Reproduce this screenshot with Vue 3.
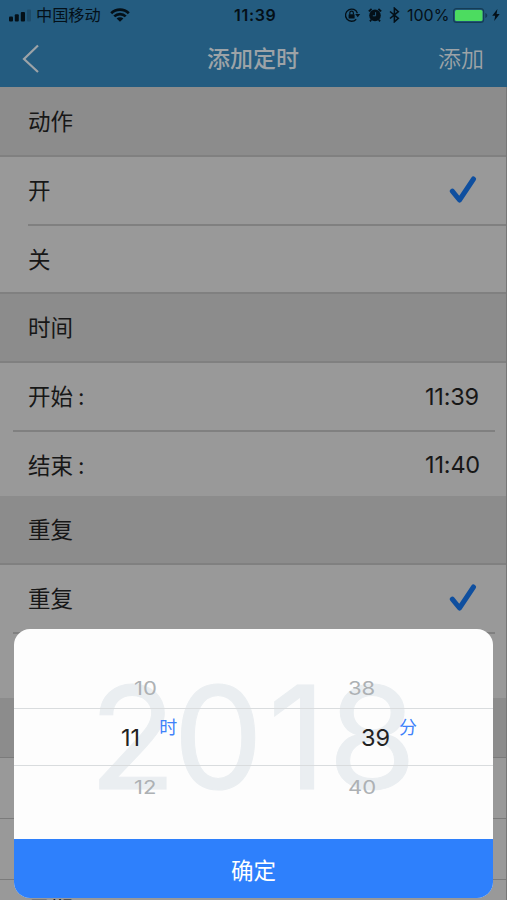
<script setup>
import { ref } from 'vue'

const action = ref('on')
const repeat = ref(true)
const start = ref('11:39')
const end = ref('11:40')
const showPicker = ref(true)
const hours = ['10', '11', '12']
const minutes = ['38', '39', '40']
const confirm = () => {
  showPicker.value = false
}
</script>
<template>
  <div class="page">
    <div class="top">
      <div class="status">
        <svg class="signal" width="24" height="14" viewBox="0 0 24 14">
          <rect x="0" y="8.5" width="4" height="5" rx="1" />
          <rect x="5.8" y="6.3" width="4" height="7.2" rx="1" />
          <rect x="11.8" y="4" width="4.2" height="9.5" rx="1" />
          <rect x="18" y="1.5" width="4" height="12" rx="1" opacity=".2" />
        </svg>
        <span class="carrier">中国移动</span>
        <svg class="wifi" width="20" height="14" viewBox="0 0 20 14">
          <path d="M1.2 5.2a12.6 12.6 0 0 1 17.6 0M4.3 8.4a8.1 8.1 0 0 1 11.4 0" fill="none" stroke="#041018" stroke-width="2.7" />
          <path d="M10 13.8 6.6 10.6a4.8 4.8 0 0 1 6.8 0z" />
        </svg>
        <span class="clock">11:39</span>
        <svg class="lock" width="17" height="16" viewBox="0 0 17 16">
          <path d="M12.2 12.2a6.1 6.1 0 1 1 1.2-6" fill="none" stroke="#041018" stroke-width="1.3" />
          <path d="M11.2 7h5l-2.5 3.2z" />
          <rect x="4.6" y="7.2" width="6" height="4.4" rx=".6" />
          <path d="M5.8 7.4V6a1.8 1.8 0 0 1 3.6 0v1.4" fill="none" stroke="#041018" stroke-width="1.2" />
        </svg>
        <svg class="alarm" width="14" height="14" viewBox="0 0 14 14">
          <circle cx="7" cy="7.4" r="5.8" />
          <path d="M.8 3.4 3.6 1M13.2 3.4 10.4 1M3.2 11.8 2 13.4M10.8 11.8 12 13.4" stroke="#041018" stroke-width="1.8" />
          <path d="M7.6 4.2v3.6H4.8" fill="none" stroke="#245c80" stroke-width="1" />
        </svg>
        <svg class="bt" width="11" height="16" viewBox="0 0 11 16">
          <path d="M1 4.5 9.3 11.3 5.4 14.8V1.2L9.3 4.7 1 11.5" fill="none" stroke="#041018" stroke-width="1.6" />
        </svg>
        <span class="percent">100%</span>
        <svg class="battery" width="35" height="15" viewBox="0 0 35 15">
          <rect x=".6" y=".6" width="30" height="13.8" rx="3" fill="none" stroke="#153c55" stroke-width="1.1" />
          <rect x="2" y="2" width="27.5" height="11" rx="1.5" fill="#4cdc60" />
          <path d="M32.3 5v5c2.6-1 2.6-4 0-5z" fill="#153c55" />
        </svg>
        <svg class="bolt" width="8" height="12" viewBox="0 0 8 12">
          <path d="M5.4 0 .2 6.8h3L2.2 12l5.5-7H4.6z" />
        </svg>
      </div>
      <div class="nav">
        <svg class="back" width="18" height="30" viewBox="0 0 18 30">
          <path d="M16 1.5 2 15l14 13" fill="none" stroke="#9da3a7" stroke-width="2.2" />
        </svg>
        <h1>添加定时</h1>
        <span class="add">添加</span>
      </div>
    </div>

    <div class="section first">动作</div>
    <div class="row" @click="action = 'on'">
      <span>开</span>
      <svg v-if="action === 'on'" class="check" width="28" height="28" viewBox="0 0 28 28">
        <path d="M3.3 15.2 10.5 24 24.5 3" />
      </svg>
    </div>
    <div class="row inset" @click="action = 'off'">
      <span>关</span>
      <svg v-if="action === 'off'" class="check" width="28" height="28" viewBox="0 0 28 28">
        <path d="M3.3 15.2 10.5 24 24.5 3" />
      </svg>
    </div>
    <div class="section ruled">时间</div>
    <div class="row">
      <span>开始<i>:</i></span>
      <span class="time">{{ start }}</span>
    </div>
    <div class="row short">
      <span>结束<i>:</i></span>
      <span class="time">{{ end }}</span>
    </div>
    <div class="section repeat">重复</div>
    <div class="row" @click="repeat = !repeat">
      <span>重复</span>
      <svg v-if="repeat" class="check" width="28" height="28" viewBox="0 0 28 28">
        <path d="M3.3 15.2 10.5 24 24.5 3" />
      </svg>
    </div>
    <div class="row gap"></div>
    <div class="section small"></div>
    <div class="row day"></div>
    <div class="row day"></div>
    <div class="row day"><span>星期</span></div>

    <div class="edge"></div>

    <div v-if="showPicker" class="picker">
      <div class="wheels">
        <svg class="year" width="479" height="210" viewBox="0 0 479 210">
          <text x="75 159 254 314" y="160">2018</text>
        </svg>
        <div class="band"></div>
        <div class="wheel">
          <span class="far">{{ hours[0] }}</span>
          <span class="now">{{ hours[1] }}<em>时</em></span>
          <span class="far">{{ hours[2] }}</span>
        </div>
        <div class="wheel minute">
          <span class="far">{{ minutes[0] }}</span>
          <span class="now">{{ minutes[1] }}<em>分</em></span>
          <span class="far">{{ minutes[2] }}</span>
        </div>
      </div>
      <button class="ok" @click="confirm">确定</button>
    </div>
  </div>
</template>

<style>
body {
  margin: 0;
  overflow: hidden;
}
</style>

<style scoped>
.page {
  position: relative;
  width: 507px;
  height: 900px;
  overflow: hidden;
  background: #999;
  color: #171717;
  font-family: Inter, "Noto Sans CJK SC", sans-serif;
  font-size: 22.5px;
}
.page * {
  box-sizing: border-box;
}
.top {
  height: 87px;
  background: #245c80;
}
.status {
  height: 30px;
  display: flex;
  align-items: center;
  padding-left: 9px;
  color: #041018;
  fill: #041018;
  font-size: 16.2px;
  line-height: 30px;
}
.status svg {
  flex: none;
}
.carrier {
  width: 66px;
  margin-left: 3px;
}
.wifi {
  margin-left: 8px;
}
.clock {
  width: 110px;
  margin-left: 104px;
  font-weight: 600;
  font-size: 16px;
  letter-spacing: 0.7px;
}
.alarm {
  margin-left: 7px;
}
.bt {
  margin-left: 7px;
}
.percent {
  width: 46px;
  margin-left: 7px;
  font-size: 16px;
}
.bolt {
  margin-left: 4px;
}
.nav {
  height: 57px;
  display: grid;
  grid-template-columns: 100px 1fr 100px;
  align-items: center;
  padding: 0 23px 0 22px;
  color: #9da3a7;
}
h1 {
  margin: 0;
  text-align: center;
  font-size: 23px;
  font-weight: 500;
  line-height: 40px;
}
.add {
  text-align: right;
  font-size: 23px;
  font-weight: 350;
  line-height: 40px;
}
.section {
  height: 68px;
  padding: 0 28px;
  background: #8c8c8c;
  line-height: 68px;
}
.section.first {
  line-height: 70px;
}
.row {
  height: 69px;
  padding: 0 28px;
  display: flex;
  justify-content: space-between;
  align-items: center;
  border-top: 2px solid #808080;
  line-height: 34px;
}
.row i {
  font-style: normal;
  margin-left: 5px;
}
.row.inset {
  height: 68px;
  margin-left: 28px;
  padding-left: 0;
}
.row.inset span {
  padding-top: 2px;
}
.ruled {
  height: 69px;
  border-top: 2px solid #808080;
}
.row.short {
  height: 66px;
  margin: 0 12px 0 13px;
  padding: 3px 15px 0;
}
.section.repeat {
  height: 67px;
}
.row .time {
  font-size: 23.5px;
  letter-spacing: -0.2px;
}
.row.short .time {
  padding-bottom: 2px;
}
.check {
  margin: 0 2px 1px 0;
}
.check path {
  fill: none;
  stroke: #0f4f9f;
  stroke-width: 5;
  stroke-linecap: round;
  stroke-linejoin: round;
}
.row.gap {
  height: 66px;
  margin: 0 12px 0 13px;
}
.small {
  height: 59px;
}
.row.day {
  height: 61px;
  border-top: 1px solid #7b7b7b;
}
.edge {
  position: absolute;
  top: 87px;
  right: 0;
  bottom: 0;
  width: 1px;
  background: #777;
}
.picker {
  position: absolute;
  left: 14px;
  top: 629px;
  width: 479px;
  height: 269px;
  border-radius: 16px;
  overflow: hidden;
  background: #fdfdfd;
}
.wheels {
  position: relative;
  height: 210px;
  display: flex;
}
.year {
  position: absolute;
  left: 0;
  top: 0;
}
.year text {
  font-size: 143px;
  font-weight: 400;
  fill: #eaeef1;
  stroke: #eaeef1;
  stroke-width: 1;
}
.band {
  position: absolute;
  left: 0;
  right: 0;
  top: 79px;
  height: 58px;
  border-top: 1px solid #d9dcde;
  border-bottom: 1px solid #d9dcde;
}
.wheel {
  position: relative;
  width: 216px;
  padding: 49px 0 0 107px;
  display: flex;
  flex-direction: column;
}
.far {
  width: 50px;
  height: 22px;
  padding-left: 13px;
  font-size: 19px;
  line-height: 22px;
  color: #adb1b4;
  transform: scale(1.16, 0.95);
  transform-origin: 13px 50%;
}
.now {
  height: 77px;
  display: flex;
  font-size: 23.5px;
  line-height: 75px;
  color: #222;
}
.now em {
  margin-left: 19px;
  font-style: normal;
  font-size: 18px;
  line-height: 55px;
  color: #3f82fa;
}
.wheel.minute {
  padding-left: 131px;
}
.wheel.minute .far {
  margin-left: -26px;
}
.wheel.minute .now em {
  margin-left: 9px;
}
.ok {
  display: block;
  width: 100%;
  height: 59px;
  border: 0;
  padding: 0;
  background: #2e80fc;
  color: #fff;
  font-family: inherit;
  font-size: 22.5px;
}
</style>
